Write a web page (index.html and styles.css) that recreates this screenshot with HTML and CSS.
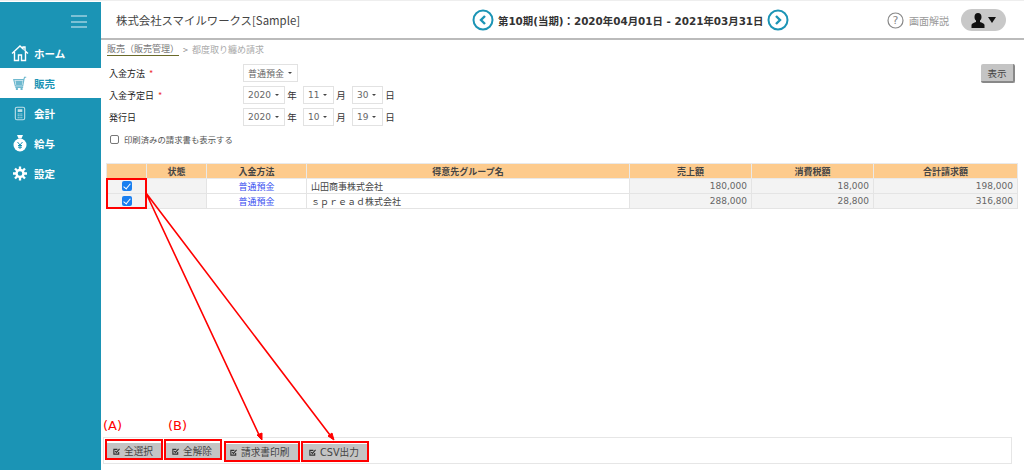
FILE: index.html
```html
<!DOCTYPE html>
<html lang="ja">
<head>
<meta charset="utf-8">
<title>都度取り纏め請求</title>
<link rel="stylesheet" href="styles.css">
</head>
<body>
<div class="app">
  <aside class="sidebar">
    <div class="burger"><span></span><span></span><span></span></div>
    <nav class="nav">
      <a class="nav-item">
        <svg class="nav-icon" viewBox="0 0 18 18"><path d="M1 9.500 9 2l3 2.800V3h2v3.700l3 2.800M3.500 8v8.500h4V11h3v5.500h4V8" fill="none" stroke="#fff" stroke-width="1.400"/></svg>
        <span>ホーム</span>
      </a>
      <a class="nav-item active">
        <svg class="nav-icon small" viewBox="0 0 18 18"><path d="M1 4h13l-1.500 8H3zM14 4l.800-3H17M3 14h10" fill="none" stroke="#6fb9cf" stroke-width="1.500"/><path d="M3 5.500h9.500L11.500 11H4z" fill="#6fb9cf"/><circle cx="5" cy="16" r="1.500" fill="#6fb9cf"/><circle cx="11" cy="16" r="1.500" fill="#6fb9cf"/></svg>
        <span>販売</span>
      </a>
      <a class="nav-item">
        <svg class="nav-icon small" viewBox="0 0 18 18"><rect x="3" y="1" width="12" height="16" rx="2" fill="none" stroke="#bfe0e9" stroke-width="1.400"/><rect x="6" y="3.500" width="6" height="3.500" fill="#bfe0e9"/><path d="M6 9.500h6M6 12h6M6 14.500h6" stroke="#bfe0e9" stroke-width="1.300" stroke-dasharray="1.500 .8"/></svg>
        <span>会計</span>
      </a>
      <a class="nav-item">
        <svg class="nav-icon" viewBox="0 0 18 18"><path d="M6 1h6l-1.500 3.500h-3z" fill="#fff"/><circle cx="9" cy="11" r="6.500" fill="#fff"/><path d="M6.500 8 9 11l2.500-3M9 11v4M7 11.500h4M7 13.200h4" fill="none" stroke="#1b94b5" stroke-width="1"/></svg>
        <span>給与</span>
      </a>
      <a class="nav-item">
        <svg class="nav-icon small" viewBox="0 0 18 18"><circle cx="9" cy="9" r="4.500" fill="none" stroke="#fff" stroke-width="3.200"/><path d="M9 0v4M9 14v4M0 9h4M14 9h4M2.600 2.600l2.800 2.800M12.600 12.600l2.800 2.800M15.400 2.600l-2.800 2.800M5.400 12.600l-2.800 2.800" stroke="#fff" stroke-width="3"/></svg>
        <span>設定</span>
      </a>
    </nav>
  </aside>

  <main class="main">
    <header class="topbar">
      <div class="company">株式会社スマイルワークス[Sample]</div>
      <div class="period">
        <svg class="period-btn" viewBox="0 0 22 22"><circle cx="11" cy="11" r="9.500" fill="none" stroke="#1b94b5" stroke-width="2"/><path d="M13 7l-4 4 4 4" fill="none" stroke="#1b94b5" stroke-width="2.400"/></svg>
        <span>第10期(当期)：2020年04月01日 - 2021年03月31日</span>
        <svg class="period-btn" viewBox="0 0 22 22"><circle cx="11" cy="11" r="9.500" fill="none" stroke="#1b94b5" stroke-width="2"/><path d="M9 7l4 4-4 4" fill="none" stroke="#1b94b5" stroke-width="2.400"/></svg>
      </div>
      <div class="top-right">
        <svg class="help-icon" viewBox="0 0 17 17"><circle cx="8.500" cy="8.500" r="7.500" fill="none" stroke="#888" stroke-width="1.200"/><text x="8.500" y="12.300" class="help-q">?</text></svg>
        <span class="help-label">画面解説</span>
        <div class="user-pill">
          <svg class="user-icon" viewBox="0 0 14 15"><path d="M7 0c2.200 0 3.500 1.700 3.500 3.900 0 1.600-.7 3-1.500 3.700v1.300c1.800.7 4.500 1.500 4.500 3.100V15H.5v-3c0-1.600 2.700-2.400 4.500-3.100V7.600C4.200 6.900 3.500 5.500 3.500 3.900 3.500 1.700 4.800 0 7 0z" fill="#111"/></svg>
          <span class="user-caret"></span>
        </div>
      </div>
    </header>

    <div class="breadcrumb"><span class="crumb-link">販売（販売管理）</span><span class="crumb-sep">&gt;</span><span>都度取り纏め請求</span></div>

    <section class="form-area">
      <div class="form">
        <div class="form-row">
          <label class="form-label">入金方法<b class="req">*</b></label>
          <span class="select">普通預金<i class="caret"></i></span>
        </div>
        <div class="form-row">
          <label class="form-label">入金予定日<b class="req">*</b></label>
          <span class="select">2020<i class="caret"></i></span><span class="unit">年</span>
          <span class="select">11<i class="caret"></i></span><span class="unit">月</span>
          <span class="select">30<i class="caret"></i></span><span class="unit">日</span>
        </div>
        <div class="form-row">
          <label class="form-label">発行日</label>
          <span class="select">2020<i class="caret"></i></span><span class="unit">年</span>
          <span class="select">10<i class="caret"></i></span><span class="unit">月</span>
          <span class="select">19<i class="caret"></i></span><span class="unit">日</span>
        </div>
        <div class="check-row"><span class="blank-check"></span>印刷済みの請求書も表示する</div>
      </div>
      <button class="show-btn">表示</button>
    </section>

    <table class="grid">
      <colgroup>
        <col class="c1"><col class="c2"><col class="c3"><col class="c4"><col class="c5"><col class="c6"><col class="c7">
      </colgroup>
      <thead>
        <tr><th></th><th>状態</th><th>入金方法</th><th>得意先グループ名</th><th>売上額</th><th>消費税額</th><th>合計請求額</th></tr>
      </thead>
      <tbody>
        <tr>
          <td class="center"><span class="tick"></span></td><td></td>
          <td class="center white"><a class="link">普通預金</a></td>
          <td class="white">山田商事株式会社</td>
          <td class="num">180,000</td><td class="num">18,000</td><td class="num">198,000</td>
        </tr>
        <tr>
          <td class="center"><span class="tick"></span></td><td></td>
          <td class="center white"><a class="link">普通預金</a></td>
          <td class="white">ｓｐｒｅａｄ株式会社</td>
          <td class="num">288,000</td><td class="num">28,800</td><td class="num">316,800</td>
        </tr>
      </tbody>
    </table>

    <footer class="actions">
      <button class="act act-1"><svg class="act-icon" viewBox="0 0 8 8"><path d="M6.500 4.500V7H1V1.500h4" fill="none" stroke="#333" stroke-width="1.300"/><path d="M2.500 3.500 4 5l3.500-4" fill="none" stroke="#333" stroke-width="1.300"/></svg>全選択</button>
      <button class="act act-2"><svg class="act-icon" viewBox="0 0 8 8"><path d="M6.500 4.500V7H1V1.500h4" fill="none" stroke="#333" stroke-width="1.300"/><path d="M2.500 3.500 4 5l3.500-4" fill="none" stroke="#333" stroke-width="1.300"/></svg>全解除</button>
      <button class="act act-3"><svg class="act-icon" viewBox="0 0 8 8"><path d="M6.500 4.500V7H1V1.500h4" fill="none" stroke="#333" stroke-width="1.300"/><path d="M2.500 3.500 4 5l3.500-4" fill="none" stroke="#333" stroke-width="1.300"/></svg>請求書印刷</button>
      <button class="act act-4"><svg class="act-icon" viewBox="0 0 8 8"><path d="M6.500 4.500V7H1V1.500h4" fill="none" stroke="#333" stroke-width="1.300"/><path d="M2.500 3.500 4 5l3.500-4" fill="none" stroke="#333" stroke-width="1.300"/></svg>CSV出力</button>
    </footer>
  </main>
</div>

<div class="mark mark-a">(A)</div>
<div class="mark mark-b">(B)</div>
<div class="redbox box-checks"></div>
<div class="redbox box-1"></div>
<div class="redbox box-2"></div>
<div class="redbox box-3"></div>
<div class="redbox box-4"></div>
<svg class="arrows" viewBox="0 0 1024 470">
  <path d="M146 193 261 439M146 193 333 439" fill="none" stroke="#f00" stroke-width="1.600"/>
  <path d="M257 435l5 5 0-7zM328 436l6 4-2-7z" fill="#f00" stroke="#f00"/>
</svg>
</body>
</html>
```
FILE: styles.css
```css
* { box-sizing: border-box; }
html, body { margin: 0; padding: 0; }
body {
  width: 1024px; height: 470px; overflow: hidden; position: relative; background: #fff;
  font-family: "DejaVu Sans", "Noto Sans CJK JP", sans-serif; font-size: 9px; color: #333;
}
.app { display: flex; height: 470px; padding-top: 1px; border-top: 1px solid #eee; }
.sidebar { width: 101px; flex: none; background: #1b94b5; color: #fff; }
.burger { height: 36px; padding: 13px 14px 0 71px; display: flex; flex-direction: column; gap: 3.500px; }
.burger span { height: 2px; background: #7cc1d5; }
.nav { display: flex; flex-direction: column; }
.nav-item {
  height: 30px; display: flex; align-items: center; gap: 5px; padding-left: 11px;
  font: bold 10.500px "Noto Sans CJK JP", sans-serif; color: #fff;
}
.nav-item.active { background: #fff; color: #1b94b5; }
.nav-icon { width: 18px; height: 18px; flex: none; }
.nav-icon.small { width: 14px; height: 15px; margin: 0 2px; }

.main { flex: 1; min-width: 0; display: flex; flex-direction: column; }
.topbar {
  height: 38px; flex: none; display: flex; align-items: center; padding-left: 15px;
  border-bottom: 2px solid #bbb; position: relative;
}
.company { font: 11.400px "Noto Sans CJK JP", sans-serif; color: #444; width: 356px; }
.period { display: flex; align-items: center; gap: 4px; font: bold 10.400px "DejaVu Sans", "Noto Sans CJK JP", sans-serif; color: #333; }
.period-btn { width: 22px; height: 22px; flex: none; }
.top-right { margin-left: auto; display: flex; align-items: center; padding-right: 18px; }
.help-icon { width: 17px; height: 17px; }
.help-q { font: 11px "DejaVu Sans", sans-serif; fill: #888; text-anchor: middle; }
.help-label { font: 10px "Noto Sans CJK JP", sans-serif; color: #999; margin-left: 5px; margin-right: 12px; }
.user-pill { width: 45px; height: 22px; border-radius: 11px; background: #c8c8c8; display: flex; align-items: center; justify-content: center; gap: 3px; }
.user-icon { width: 14px; height: 15px; }
.user-caret { border: 4px solid transparent; border-top: 6px solid #111; border-bottom: 0; }

.breadcrumb { height: 19px; padding: 3px 0 0 6px; font: 9px "Noto Sans CJK JP", sans-serif; color: #aaa; display: flex; gap: 4px; }
.crumb-link { color: #777; border-bottom: 1px solid #6a6a2a; height: 13px; line-height: 11px; }
.crumb-sep { color: #888; }

.form-area { display: flex; justify-content: space-between; padding: 5px 9px 0 8px; height: 104px; flex: none; }
.form { display: flex; flex-direction: column; gap: 4px; }
.form-row { display: flex; align-items: center; height: 18px; }
.form-label { width: 134px; font: 9px "Noto Sans CJK JP", sans-serif; color: #222; }
.req { color: #e33; font-weight: normal; margin-left: 4px; }
.select {
  height: 18px; border: 1px solid #e2e2e2; padding: 0 5px 0 4px; display: inline-flex; align-items: center; gap: 4px;
  color: #666; font-size: 9px; font-family: "DejaVu Sans", "Noto Sans CJK JP", sans-serif; min-width: 31px;
}
.caret { border: 2px solid transparent; border-top: 2.500px solid #444; border-bottom: 0; }
.unit { width: 18px; padding-right: 4px; text-align: center; font: 9.500px "Noto Sans CJK JP", sans-serif; color: #333; }
.check-row { display: flex; align-items: center; gap: 5px; font: 8.400px "Noto Sans CJK JP", sans-serif; color: #555; height: 14px; margin-top: 2px; }
.blank-check { width: 9px; height: 9px; border: 1px solid #777; border-radius: 2px; margin-left: 1px; }
.show-btn {
  width: 34px; height: 19px; background: #c4c4c4; border: 0; border-right: 2px solid #888; border-bottom: 2px solid #888;
  border-radius: 2px; font: 9.500px "Noto Sans CJK JP", sans-serif; color: #444; padding: 0; margin: 0;
}

.grid { width: 911px; margin-left: 5px; border-collapse: collapse; table-layout: fixed; flex: none; }
.c1 { width: 40px; } .c2 { width: 60px; } .c3 { width: 100px; } .c4 { width: 323px; }
.c5 { width: 122px; } .c6 { width: 122px; } .c7 { width: 144px; }
.grid th {
  height: 15px; background: #fdcb8d; border: 1px solid #e9e9e9; font: bold 9px "Noto Sans CJK JP", sans-serif; color: #444; padding: 0;
}
.grid td { height: 15px; background: #f3f3f3; border: 1px solid #e4e4e4; padding: 0 4px; font-size: 9px; color: #555; font-family: "DejaVu Sans", "Noto Sans CJK JP", sans-serif; }
.grid td.white { background: #fff; font-family: "Noto Sans CJK JP", sans-serif; color: #444; }
.grid td.center { text-align: center; }
.grid td.num { text-align: right; color: #666; }
.link { color: #3a50f0; }
.tick { display: inline-block; width: 10px; height: 10px; border-radius: 2px; background: #1a7ff0; position: relative; vertical-align: middle; }
.tick::after {
  content: ""; position: absolute; left: 3px; top: 1px; width: 3px; height: 6px;
  border: solid #fff; border-width: 0 1.500px 1.500px 0; transform: rotate(40deg);
}

.actions {
  margin-top: auto; margin-bottom: 6px; margin-left: 2px; margin-right: 12px; height: 27px; flex: none;
  border: 1px solid #e6e6e6; display: flex; align-items: flex-start; padding: 5px 0 0 3px;
}
.act {
  height: 17px; background: #c4c4c4; border: 0; border-bottom: 1px solid #777; padding: 0; display: flex; align-items: center; gap: 4px;
  font: 9.700px "DejaVu Sans", "Noto Sans CJK JP", sans-serif; color: #444; flex: none;
}
.act-1 { width: 55px; padding-left: 6px; }
.act-2 { width: 56px; margin-left: 3px; padding-left: 7px; }
.act-3 { width: 72px; margin-left: 5px; padding-left: 4px; margin-top: 1px; }
.act-4 { width: 64px; margin-left: 5px; padding-left: 6px; margin-top: 1px; }
.act-icon { width: 7px; height: 7px; flex: none; }

.redbox { position: absolute; border: 2px solid #f00; }
.box-checks { left: 106px; top: 178px; width: 41px; height: 31px; }
.box-1 { left: 105px; top: 439px; width: 58px; height: 21px; }
.box-2 { left: 164px; top: 439px; width: 58px; height: 21px; }
.box-3 { left: 224px; top: 441px; width: 76px; height: 21px; }
.box-4 { left: 301px; top: 441px; width: 68px; height: 21px; }
.mark { position: absolute; color: #f00; font: 13px "DejaVu Sans", sans-serif; }
.mark-a { left: 103px; top: 418px; }
.mark-b { left: 168px; top: 418px; }
.arrows { position: absolute; left: 0; top: 0; width: 1024px; height: 470px; pointer-events: none; }
```
